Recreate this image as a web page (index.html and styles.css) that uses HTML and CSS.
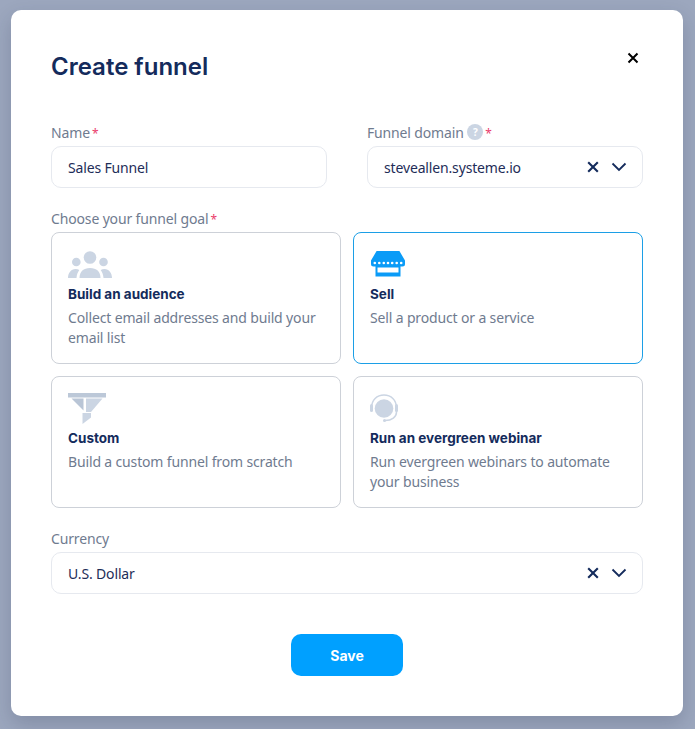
FILE: index.html
```html
<!DOCTYPE html>
<html lang="en">
<head>
  <meta charset="UTF-8" />
  <title>Create funnel</title>
  <link rel="stylesheet" href="styles.css">
</head>
<body>

  <div class="modal">
    <div class="modal-head">
      <h1>Create funnel</h1>
      <button class="close" aria-label="Close">
        <svg width="12" height="12" viewBox="0 0 12 12"><path d="M1.500 1.500l9 9M10.500 1.500l-9 9" stroke="#000" stroke-width="2" fill="none"/></svg>
      </button>
    </div>

    <div class="row">
      <div class="field">
        <div class="label">Name<span class="req">*</span></div>
        <div class="input">Sales Funnel</div>
      </div>
      <div class="field">
        <div class="label">Funnel domain <span class="help">?</span><span class="req">*</span></div>
        <div class="input">
          <span>steveallen.systeme.io</span>
          <span class="controls">
            <svg width="12" height="12" viewBox="0 0 12 12"><path d="M1.200 1.200l9.600 9.600M10.800 1.200l-9.600 9.600" stroke="#142b5c" stroke-width="2.100" fill="none"/></svg>
            <svg width="16" height="10" viewBox="0 0 16 10"><path d="M1.500 1.500L8 8l6.500-6.500" stroke="#142b5c" stroke-width="1.800" fill="none"/></svg>
          </span>
        </div>
      </div>
    </div>

    <div class="label goal-label">Choose your funnel goal<span class="req">*</span></div>
    <div class="goals">
      <div class="goal">
        <div class="icon-box">
          <svg width="44" height="27" viewBox="0 0 44 27" fill="#cbd5e3">
            <circle cx="22" cy="6.500" r="6.300"/>
            <circle cx="8.300" cy="11" r="4.300"/>
            <circle cx="35.500" cy="11" r="4.300"/>
            <path d="M11.500 27c0-6.500 4-10 10.500-10s10.500 3.500 10.500 10z"/>
            <path d="M0 27c0-5 3-9 7.500-9 1.500 0 2.800.3 3.800 1-1.500 2-2.600 4.800-2.800 8z"/>
            <path d="M44 27c0-5-3-9-7.500-9-1.500 0-2.800.3-3.800 1 1.500 2 2.600 4.800 2.800 8z"/>
          </svg>
        </div>
        <div class="goal-title">Build an audience</div>
        <div class="goal-text">Collect email addresses and build your email list</div>
      </div>
      <div class="goal active">
        <div class="icon-box">
          <svg width="36" height="27" viewBox="0 0 36 27" fill="#0a9bf7">
            <path d="M6 1a1.500 1.500 0 0 1 1-1h22a1.500 1.500 0 0 1 1 1l5 8.500V13a2.500 2.500 0 0 1-2.500 2.500h-29A2.500 2.500 0 0 1 1 13V9.500z"/>
            <path d="M5.500 15h25v10.500h-25zM7.500 16.500v5h21v-5z" fill-rule="evenodd"/>
            <g fill="#fff">
              <circle cx="4.800" cy="12" r="1.300"/><circle cx="9.300" cy="12" r="1.300"/><circle cx="13.800" cy="12" r="1.300"/><circle cx="18" cy="12" r="1.300"/><circle cx="22.200" cy="12" r="1.300"/><circle cx="26.700" cy="12" r="1.300"/><circle cx="31.200" cy="12" r="1.300"/>
            </g>
          </svg>
        </div>
        <div class="goal-title">Sell</div>
        <div class="goal-text">Sell a product or a service</div>
      </div>
      <div class="goal">
        <div class="icon-box">
          <svg width="38" height="31" viewBox="0 0 38 31">
            <path d="M0 0h38v4.500H0z" fill="#bcc8d8"/>
            <path d="M3.500 5.500h12v12z" fill="#b9c5d6"/>
            <path d="M18 5.500h16.500L23 19h-5z" fill="#cbd5e3"/>
            <path d="M14.500 20H23v4.500L14.500 31z" fill="#cbd5e3"/>
          </svg>
        </div>
        <div class="goal-title">Custom</div>
        <div class="goal-text">Build a custom funnel from scratch</div>
      </div>
      <div class="goal">
        <div class="icon-box">
          <svg width="28" height="28" viewBox="0 0 28 28" fill="none">
            <circle cx="14" cy="14.500" r="9.300" fill="#cbd5e3"/>
            <path d="M1.500 14C1.500 6 7 1 14 1s12.500 5 12.500 13v4c0 5-4.500 8.500-11.500 8.500" stroke="#cbd5e3" stroke-width="1.500"/>
            <rect x="0" y="10" width="3" height="8" rx="1.500" fill="#cbd5e3"/>
            <rect x="25" y="10" width="3" height="8" rx="1.500" fill="#cbd5e3"/>
            <circle cx="14.500" cy="26.500" r="1.500" fill="#cbd5e3"/>
          </svg>
        </div>
        <div class="goal-title">Run an evergreen webinar</div>
        <div class="goal-text">Run evergreen webinars to automate your business</div>
      </div>
    </div>

    <div class="label currency-label">Currency</div>
    <div class="input">
      <span>U.S. Dollar</span>
      <span class="controls">
        <svg width="12" height="12" viewBox="0 0 12 12"><path d="M1.200 1.200l9.600 9.600M10.800 1.200l-9.600 9.600" stroke="#142b5c" stroke-width="2.100" fill="none"/></svg>
        <svg width="16" height="10" viewBox="0 0 16 10"><path d="M1.500 1.500L8 8l6.500-6.500" stroke="#142b5c" stroke-width="1.800" fill="none"/></svg>
      </span>
    </div>

    <div class="actions">
      <button class="save">Save</button>
    </div>
  </div>

</body>
</html>
```

FILE: styles.css
```css
body {
  font-family: 'Noto Sans', sans-serif;
  letter-spacing: -0.15px;
  background-color: #9ca7be;
  margin: 0;
  height: 729px;
  padding: 10px 12px 13px 11px;
  box-sizing: border-box;
  overflow: hidden;
}

.modal {
  background-color: white;
  border-radius: 10px;
  height: 706px;
  padding: 0 40px;
  box-sizing: border-box;
  box-shadow: 0 8px 20px rgba(30, 40, 70, 0.2);
}

.modal-head {
  display: flex;
  justify-content: space-between;
  align-items: flex-start;
  height: 114px;
}

h1 {
  font-family: 'Inter', sans-serif;
  font-size: 24px;
  line-height: 30px;
  font-weight: 600;
  letter-spacing: 0;
  color: #142b5c;
  margin: 42px 0 0;
}

.close {
  border: none;
  background: none;
  padding: 0;
  margin: 42px 4px 0 0;
  line-height: 0;
  cursor: pointer;
}

.row {
  display: grid;
  grid-template-columns: 276px 276px;
  gap: 40px;
}

.label {
  font-size: 14px;
  line-height: 18px;
  height: 18px;
  color: #6f7b8f;
  margin-bottom: 4px;
}

.req {
  color: #ea3c6b;
  font-size: 12px;
  margin-left: 2px;
}

.help {
  display: inline-block;
  width: 16px;
  height: 16px;
  line-height: 16px;
  border-radius: 50%;
  background-color: #cbd5e3;
  color: white;
  font-size: 10px;
  font-weight: bold;
  text-align: center;
  vertical-align: 2px;
}

.input {
  height: 42px;
  border: 1px solid #e6e9ef;
  border-radius: 10px;
  padding: 0 15px 0 16px;
  box-sizing: border-box;
  display: flex;
  justify-content: space-between;
  align-items: center;
  font-size: 14px;
  color: #1e2d58;
}

.controls {
  display: flex;
  align-items: center;
  gap: 12px;
}

.goal-label {
  margin-top: 22px;
  margin-bottom: 4px;
}

.goals {
  display: grid;
  grid-template-columns: 290px 290px;
  grid-auto-rows: 132px;
  gap: 12px;
}

.goal {
  border: 1px solid #cdd1d8;
  border-radius: 8px;
  padding: 15px 16px 16px;
  box-sizing: border-box;
}

.goal.active {
  border-color: #1c9fe6;
}

.icon-box {
  display: flex;
  align-items: center;
  height: 32px;
  margin-bottom: 5px;
}

.goal-title {
  font-family: 'Inter', sans-serif;
  font-size: 13.5px;
  line-height: 18px;
  font-weight: 700;
  letter-spacing: 0;
  color: #142b5c;
}

.goal-text {
  font-size: 14px;
  line-height: 20px;
  color: #6f7b8f;
  margin-top: 5px;
}

.currency-label {
  margin-top: 22px;
}

.actions {
  display: flex;
  justify-content: center;
  margin-top: 40px;
}

.save {
  width: 112px;
  height: 42px;
  border: none;
  border-radius: 10px;
  background-color: #00a0ff;
  color: white;
  font-family: 'Inter', sans-serif;
  font-size: 14px;
  font-weight: bold;
  cursor: pointer;
}
```
